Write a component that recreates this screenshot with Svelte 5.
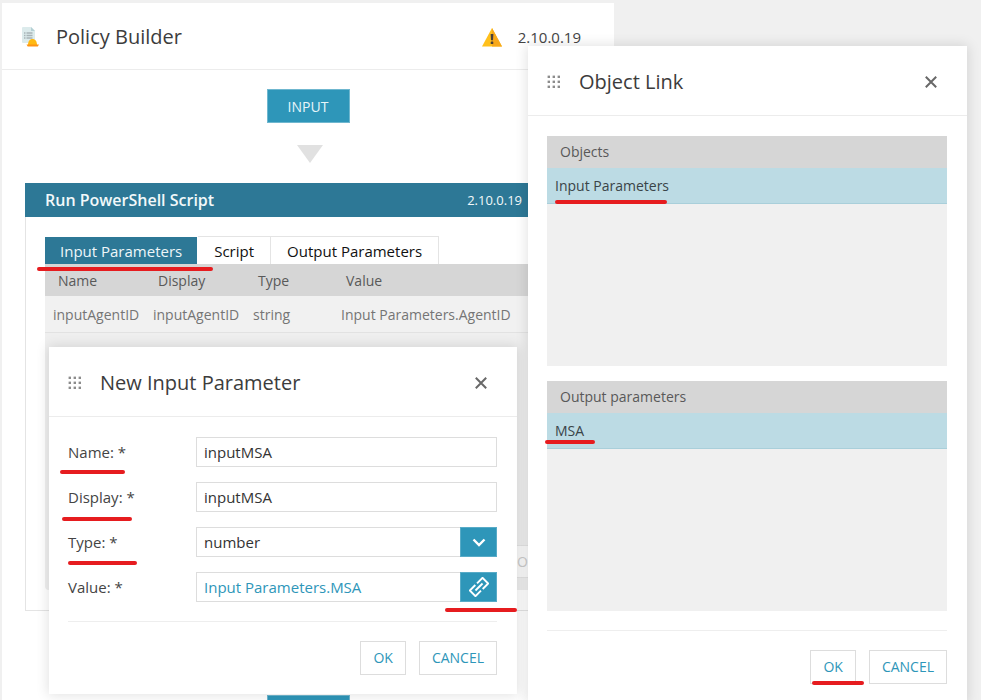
<script lang="ts">
  let name = $state('inputMSA');
  let display = $state('inputMSA');
  let type = $state('number');
  let value = $state('Input Parameters.MSA');

  const rows = [
    { name: 'inputAgentID', display: 'inputAgentID', type: 'string', value: 'Input Parameters.AgentID' }
  ];
</script>

{#snippet grip()}
  <svg class="grip" width="14" height="14" viewBox="0 0 14 14" aria-hidden="true">
    {#each [0, 5, 10] as y}
      {#each [0, 5, 10] as x}
        <rect x={x + 0.6} y={y + 0.6} width="2.4" height="2.4" fill="#8c8c8c" />
      {/each}
    {/each}
  </svg>
{/snippet}

{#snippet cross()}
  <svg width="12" height="12" viewBox="0 0 12 12" aria-hidden="true">
    <path d="M.8.8 11.2 11.2M11.2.8.8 11.2" stroke="#686868" stroke-width="2" fill="none" />
  </svg>
{/snippet}

<div class="page">
  <main class="panel">
    <header class="bar">
      <svg class="doc" width="19" height="22" viewBox="0 0 19 22" aria-hidden="true">
        <path d="M2 1h8l4 4v12H2a1 1 0 0 1-1-1V2a1 1 0 0 1 1-1z" fill="#dcebec" />
        <path d="M10 1v4h4z" fill="#b4d0d4" />
        <path d="M3 7h1.500M5.500 7h6M3 9.500h1.500M5.500 9.500h6M3 12h1.500M5.500 12h6" stroke="#a8b4b7" stroke-width="1.300" />
        <path d="M7 19c0-4 2-6 4.500-6s4.500 2 4.500 6z" fill="#ffb912" />
        <path d="M5.500 18.500h12.500l-1.200 2H6.700z" fill="#ff9413" />
      </svg>
      <h1>Policy Builder</h1>
      <svg class="warn" width="20" height="19" viewBox="0 0 20 19" aria-hidden="true">
        <path d="M10 0 20 18.500H0z" fill="#ffc01c" />
        <path d="M10 0 20 18.500H10z" fill="#f7a81b" />
        <path d="M8.600 6h2.800l-.4 6.300H9z" fill="#4a4038" />
        <rect x="8.700" y="13.400" width="2.600" height="2.600" rx=".6" fill="#4a4038" />
      </svg>
      <span class="ver">2.10.0.19</span>
    </header>

    <div class="flow">
      <button class="node">INPUT</button>
      <svg class="arrow" width="26" height="18" viewBox="0 0 26 18" aria-hidden="true">
        <path d="M0 0h26L13 18z" fill="#e1e1e1" />
      </svg>

      <section class="card">
        <header class="cardbar">
          <h2>Run PowerShell Script</h2>
          <span>2.10.0.19</span>
        </header>
        <div class="cardbody">
          <div class="tabs">
            <button class="tab on">Input Parameters<i class="mark m-tab"></i></button>
            <button class="tab">Script</button>
            <button class="tab">Output Parameters</button>
          </div>
          <div class="grid">
            <table>
              <thead>
                <tr><th>Name</th><th>Display</th><th class="narrow">Type</th><th class="wide">Value</th></tr>
              </thead>
              <tbody>
                {#each rows as r}
                  <tr>
                    <td><span>{r.name}</span></td>
                    <td><span>{r.display}</span></td>
                    <td><span>{r.type}</span></td>
                    <td><span>{r.value}</span></td>
                  </tr>
                {/each}
              </tbody>
            </table>
            <div class="actions"><button disabled>O</button></div>
          </div>
        </div>
      </section>

      <button class="node last" aria-label="Output"></button>
    </div>
  </main>

  <div class="dialog param" role="dialog" aria-labelledby="param-title">
    <header class="bar">
      {@render grip()}
      <h1 id="param-title">New Input Parameter</h1>
      <button class="close" aria-label="Close">{@render cross()}</button>
    </header>
    <form onsubmit={(e) => e.preventDefault()}>
      <div class="row">
        <label for="name">Name: *<i class="mark m-name"></i></label>
        <div class="field"><input id="name" type="text" bind:value={name} /></div>
      </div>
      <div class="row">
        <label for="display">Display: *<i class="mark m-display"></i></label>
        <div class="field"><input id="display" type="text" bind:value={display} /></div>
      </div>
      <div class="row">
        <label for="type">Type: *<i class="mark m-type"></i></label>
        <div class="field">
          <select id="type" bind:value={type}>
            <option>number</option>
            <option>string</option>
          </select>
          <span class="side">
            <svg width="14" height="9" viewBox="0 0 14 9" aria-hidden="true">
              <path d="M1.500 1.500 7 7l5.500-5.500" stroke="#fff" stroke-width="2.400" fill="none" />
            </svg>
          </span>
        </div>
      </div>
      <div class="row">
        <label for="value">Value: *</label>
        <div class="field">
          <input id="value" class="linked" type="text" bind:value />
          <button type="button" class="side" aria-label="Link object">
            <svg width="20" height="20" viewBox="0 0 20 20" aria-hidden="true">
              <g transform="rotate(-45 10 10)" fill="none" stroke="#fff" stroke-width="1.900">
                <path d="M8.800 14H1V6h7.800" />
                <path d="M11.200 6H19v8h-7.800" />
                <path d="M5 10h10" />
              </g>
            </svg>
            <i class="mark m-link"></i>
          </button>
        </div>
      </div>
      <footer>
        <button class="btn">OK</button>
        <button class="btn" type="button">CANCEL</button>
      </footer>
    </form>
  </div>

  <div class="dialog object" role="dialog" aria-labelledby="object-title">
    <header class="bar">
      {@render grip()}
      <h1 id="object-title">Object Link</h1>
      <button class="close" aria-label="Close">{@render cross()}</button>
    </header>
    <div class="lists">
      <section class="list">
        <h3>Objects</h3>
        <button class="item">Input Parameters<i class="mark m-object"></i></button>
      </section>
      <section class="list">
        <h3>Output parameters</h3>
        <button class="item">MSA<i class="mark m-msa"></i></button>
      </section>
      <footer>
        <button class="btn">OK<i class="mark m-ok"></i></button>
        <button class="btn">CANCEL</button>
      </footer>
    </div>
  </div>
</div>

<style>
  :global(body) { margin: 0; }
  .page {
    position: relative;
    box-sizing: border-box;
    height: 100vh;
    padding: 3px 0 0 2px;
    overflow: hidden;
    background: #f0f0f0;
    color: #444;
    font: 14px/20px "Open Sans", "Noto Sans", sans-serif;
  }
  .page * { box-sizing: border-box; }
  button, input, select { font: inherit; margin: 0; border-radius: 0; }
  h1, h2, h3 { margin: 0; font-weight: 400; }

  .panel { width: calc(100% - 367px); min-height: 100%; background: #fff; }
  .bar {
    display: flex;
    align-items: center;
    height: 67px;
    padding: 2px 33px 0 19px;
    border-bottom: 1px solid #ececec;
  }
  .bar h1 { flex: 1; font-size: 20px; line-height: 28px; color: #3c3c3c; }
  .doc { margin-right: 16px; }
  .warn { margin-right: 16px; }
  .ver { font-size: 15px; }

  .flow { display: flex; flex-direction: column; align-items: center; padding: 19px 23px 0; }
  .node {
    min-width: 83px;
    height: 34px;
    padding: 1px 20px 0;
    border: 1px solid #6fb7cf;
    background: #2e96b9;
    color: #e8f5f9;
  }
  .arrow { margin: 22px 0 20px 4px; }
  .last { margin-top: 84px; }
  .card { width: 100%; border: 1px solid #e4e4e4; border-top: 0; }
  .cardbar {
    display: flex;
    align-items: center;
    height: 34px;
    margin: 0 -1px;
    padding: 0 69px 0 20px;
    background: #2d7896;
    color: #f2f8fa;
  }
  .cardbar h2 { flex: 1; font-size: 16px; font-weight: 600; }
  .cardbar span { font-size: 13px; }
  .cardbody { padding: 19px 19px 20px; }
  .tabs { display: flex; }
  .tab {
    position: relative;
    height: 28px;
    padding: 0 16px;
    border: 1px solid #e4e4e4;
    border-left: 0;
    border-bottom: 0;
    background: #fff;
    color: #111;
    font-size: 15px;
  }
  .tab.on { padding: 0 15px; border-color: #fff; background: #2d7896; color: #eef6f9; }
  .grid {
    display: flex;
    flex-direction: column;
    justify-content: space-between;
    min-height: 326px;
    border-radius: 0 0 4px 4px;
    background: #efefef;
  }
  table { width: 100%; border-collapse: collapse; table-layout: fixed; color: #757575; }
  th { width: 100px; height: 32px; padding: 2px 13px 0; background: #d6d6d6; color: #595959; font-weight: 400; text-align: left; }
  th.narrow { width: 88px; }
  th.wide { width: auto; }
  td { height: 36px; padding: 2px 6px 0 8px; border-bottom: 1px solid #e2e2e2; background: #f1f1f1; }
  td span { display: block; overflow: hidden; white-space: nowrap; }
  .actions { display: flex; justify-content: flex-end; padding: 0 6px 12px; }
  .actions button { width: 60px; height: 33px; padding: 0 11px; border: 1px solid #e4e4e4; background: #fafafa; color: #ccc; text-align: left; }

  .dialog { position: absolute; background: #fff; box-shadow: 0 0 12px 1px rgba(0, 0, 0, 0.12); }
  .dialog .bar { height: 70px; padding-right: 30px; }
  .grip { margin-right: 18px; }
  .close { display: flex; padding: 0; border: 0; background: none; }
  .param { left: 49px; top: 347px; width: 468px; }
  .object { right: 14px; top: 46px; width: 439px; }
  form, .lists { padding: 20px 20px 19px 19px; }
  form .row { font-size: 15px; }
  .row { display: flex; align-items: center; margin-bottom: 15px; }
  label { position: relative; width: 128px; }
  .field { display: flex; flex: 1; height: 30px; border: 1px solid #ddd; }
  .field input, .field select {
    flex: 1;
    min-width: 0;
    padding: 0 7px;
    border: 0;
    appearance: none;
    background: #fff;
    color: #333;
  }
  .field input.linked { color: #2e96b9; }
  .side {
    position: relative;
    display: flex;
    align-items: center;
    justify-content: center;
    width: 37px;
    margin: -1px;
    padding: 0;
    border: 1px solid #58abc7;
    background: #2e96b9;
  }
  .side svg { flex: none; }
  footer { display: flex; justify-content: flex-end; gap: 13px; margin-top: 19px; padding-top: 19px; border-top: 1px solid #eee; }
  .btn { position: relative; height: 34px; padding: 0 12px; border: 1px solid #ddd; background: #fff; color: #2e96b9; }
  .list { height: 230px; margin-bottom: 15px; background: #f0f0f0; }
  .list h3 { height: 32px; padding: 0 13px; background: #d6d6d6; color: #595959; font-size: 14px; line-height: 32px; }
  .item { position: relative; display: block; width: 100%; height: 36px; padding: 0 8px; border: 0; border-bottom: 1px solid #a9cfda; background: #bcdbe4; color: #3a4448; text-align: left; }

  .mark { position: absolute; z-index: 1; height: 4px; border-radius: 2px; background: #e61c1f; }
  .m-tab { left: -8px; bottom: -7px; width: 176px; }
  .m-name { left: -8px; top: 28px; width: 65px; }
  .m-display { left: -6px; top: 30px; width: 70px; }
  .m-type { left: 0; top: 29px; width: 69px; }
  .m-link { right: -21px; bottom: -11px; width: 72px; }
  .m-object { left: 8px; bottom: -1px; width: 112px; }
  .m-msa { left: -2px; bottom: 4px; width: 50px; }
  .m-ok { left: 1px; bottom: -2px; width: 52px; }
</style>
